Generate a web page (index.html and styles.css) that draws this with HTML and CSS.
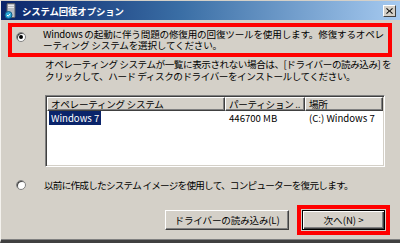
FILE: index.html
```html
<!DOCTYPE html>
<html lang="ja">
<head>
<meta charset="utf-8">
<title>システム回復オプション</title>
<link rel="stylesheet" href="styles.css">
</head>
<body>
<div class="window">
  <div class="titlebar">
    <svg class="app-icon" width="14" height="16" viewBox="0 0 14 16">
      <rect x="3" y="0.5" width="8" height="14" rx="1" fill="#b8bcc4" stroke="#5a5e66"/>
      <rect x="4" y="2" width="6" height="1" fill="#e8eaee"/>
      <rect x="4" y="4" width="6" height="1" fill="#e8eaee"/>
      <circle cx="4.5" cy="12" r="3.5" fill="#2aa8d8" stroke="#0c5a88"/>
      <path d="M3 12 l1.2 1.2 L6.2 10.8" fill="none" stroke="#fff" stroke-width="1"/>
    </svg>
    <span class="title">システム回復オプション</span>
    <span class="close">
      <svg width="9" height="8" viewBox="0 0 9 8"><path d="M1 0 L4.5 3.2 L8 0 L9 1 L5.5 4 L9 7 L8 8 L4.5 4.8 L1 8 L0 7 L3.5 4 L0 1 Z" fill="#000"/></svg>
    </span>
  </div>
  <div class="content">
    <div class="option highlight">
      <span class="radio checked"></span>
      <p class="text para1">Windows の起動に伴う問題の修復用の回復ツールを使用します。修復するオペレ<br>ーティング システムを選択してください。</p>
    </div>
    <div class="sub">
      <p class="text para2">オペレーティング システムが一覧に表示されない場合は、[ドライバーの読み込み] を<br>クリックして、ハード ディスクのドライバーをインストールしてください。</p>
      <div class="list">
        <div class="list-head">
          <span class="col c1">オペレーティング システム</span>
          <span class="col c2">パーティション ..</span>
          <span class="col c3">場所</span>
        </div>
        <div class="list-row">
          <span class="cell c1"><span class="sel">Windows 7</span></span>
          <span class="cell c2">446700 MB</span>
          <span class="cell c3">(C:) Windows 7</span>
        </div>
      </div>
    </div>
    <div class="option second">
      <span class="radio"></span>
      <p class="text para3">以前に作成したシステム イメージを使用して、コンピューターを復元します。</p>
    </div>
    <div class="buttons">
      <button class="btn load">ドライバーの読み込み(L)</button>
      <div class="red-frame">
        <button class="btn next default">次へ(N) &gt;</button>
      </div>
    </div>
  </div>
</div>
</body>
</html>
```
FILE: styles.css
```css
* { box-sizing: border-box; }
html, body {
  margin: 0;
  padding: 0;
  width: 400px;
  height: 243px;
  overflow: hidden;
  background: #d4d0c8;
}
body {
  font-family: "Noto Sans CJK JP", "Noto Sans", sans-serif;
  font-size: 9.6px;
  color: #000;
}
.window {
  width: 400px;
  height: 243px;
  display: flex;
  flex-direction: column;
  border-left: 1px solid #f4f2ee;
  border-top: 1px solid #d4d0c8;
  border-bottom: 3px solid #404040;
  box-shadow: inset 0 -1px 0 #808080;
}
.titlebar {
  height: 19px;
  display: flex;
  align-items: center;
  padding-left: 3px;
  background: linear-gradient(to right, #0a246a 0%, #3a6ea5 45%, #a6caf0 100%);
}
.app-icon { flex: none; }
.title {
  margin-left: 4px;
  color: #fff;
  font-weight: bold;
  font-size: 9.4px;
  letter-spacing: -0.1px;
}
.close {
  margin-left: auto;
  margin-right: 4px;
  width: 13px;
  height: 12px;
  background: #d4d0c8;
  display: flex;
  align-items: center;
  justify-content: center;
  border-top: 1px solid #fff;
  border-left: 1px solid #fff;
  border-right: 1px solid #404040;
  border-bottom: 1px solid #404040;
}
.close svg { width: 7px; height: 6px; }
.content {
  flex: 1;
  padding: 3px 10px 0 7px;
  display: flex;
  flex-direction: column;
}
.option {
  display: flex;
  align-items: flex-start;
}
.option.highlight {
  border: 4px solid #ff0000;
  height: 34px;
  margin-right: -2px;
  padding: 2px 0 0 4px;
}
.radio {
  flex: none;
  width: 10px;
  height: 10px;
  border-radius: 50%;
  background: #fff;
  border: 1px solid #808080;
  box-shadow: inset 1px 1px 0 #404040;
  display: flex;
  align-items: center;
  justify-content: center;
  margin-top: 3px;
  margin-right: 17px;
}
.radio.checked::after {
  content: "";
  width: 4px;
  height: 4px;
  border-radius: 50%;
  background: #000;
}
.text {
  margin: 0;
  line-height: 11px;
  white-space: nowrap;
}
.para1 {
  letter-spacing: -0.2px;
}
.sub {
  padding-left: 37px;
}
.para2 {
  margin-top: 1px;
  line-height: 12px;
  letter-spacing: -0.45px;
}
.list {
  margin-top: 13px;
  width: 340px;
  height: 72px;
  background: #fff;
  border-top: 1px solid #808080;
  border-left: 1px solid #808080;
  border-right: 1px solid #fff;
  border-bottom: 1px solid #fff;
  box-shadow: inset 1px 1px 0 #404040, inset -1px -1px 0 #d4d0c8;
  padding: 1px;
}
.list-head, .list-row {
  display: grid;
  grid-template-columns: 178px 80px 1fr;
}
.list-head {
  height: 14px;
}
.col {
  background: #d4d0c8;
  border-top: 1px solid #fff;
  border-left: 1px solid #fff;
  border-right: 1px solid #404040;
  border-bottom: 1px solid #404040;
  box-shadow: inset -1px -1px 0 #808080;
  line-height: 12px;
  padding-left: 3px;
  white-space: nowrap;
  overflow: hidden;
  letter-spacing: -0.3px;
}
.list-row {
  height: 14px;
  line-height: 14px;
}
.cell {
  padding-left: 4px;
  white-space: nowrap;
}
.cell.c1 { padding-left: 2px; }
.sel {
  display: inline-block;
  background: #0a246a;
  color: #fff;
  padding: 0 2px;
  line-height: 14px;
}
.option.second {
  margin-top: 12px;
  padding-left: 8px;
}
.option.second .radio {
  margin-top: 1px;
  margin-right: 18px;
}
.para3 {
  line-height: 12px;
  letter-spacing: -0.75px;
}
.buttons {
  margin-top: 14px;
  display: flex;
  justify-content: flex-end;
  align-items: flex-start;
}
.btn {
  font-family: inherit;
  font-size: 9.6px;
  color: #000;
  background: #d4d0c8;
  height: 20px;
  padding: 0;
  border-top: 1px solid #fff;
  border-left: 1px solid #fff;
  border-right: 1px solid #404040;
  border-bottom: 1px solid #404040;
  box-shadow: inset -1px -1px 0 #808080;
  border-radius: 0;
}
.btn.load {
  width: 124px;
  margin-top: 5px;
  margin-right: 8px;
  letter-spacing: -0.2px;
}
.red-frame {
  border: 4px solid #ff0000;
  padding: 1px;
  width: 93px;
  height: 30px;
}
.btn.next {
  width: 83px;
  border: 1px solid #000;
  box-shadow: inset 1px 1px 0 #fff, inset -1px -1px 0 #404040, inset -2px -2px 0 #808080;
}
```
